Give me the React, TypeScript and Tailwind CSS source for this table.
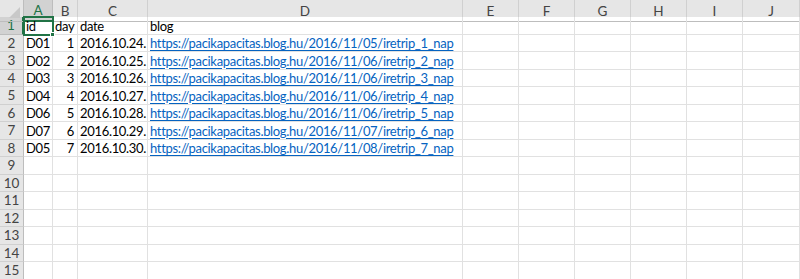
import React from "react";

const cols = ["A", "B", "C", "D", "E", "F", "G", "H", "I", "J"];

const rows = [
  { id: "id", day: "day", date: "date", blog: "blog", head: true },
  { id: "D01", day: "1", date: "2016.10.24.", blog: "https://pacikapacitas.blog.hu/2016/11/05/iretrip_1_nap" },
  { id: "D02", day: "2", date: "2016.10.25.", blog: "https://pacikapacitas.blog.hu/2016/11/06/iretrip_2_nap" },
  { id: "D03", day: "3", date: "2016.10.26.", blog: "https://pacikapacitas.blog.hu/2016/11/06/iretrip_3_nap" },
  { id: "D04", day: "4", date: "2016.10.27.", blog: "https://pacikapacitas.blog.hu/2016/11/06/iretrip_4_nap" },
  { id: "D06", day: "5", date: "2016.10.28.", blog: "https://pacikapacitas.blog.hu/2016/11/06/iretrip_5_nap" },
  { id: "D07", day: "6", date: "2016.10.29.", blog: "https://pacikapacitas.blog.hu/2016/11/07/iretrip_6_nap" },
  { id: "D05", day: "7", date: "2016.10.30.", blog: "https://pacikapacitas.blog.hu/2016/11/08/iretrip_7_nap" },
];

const TOTAL_ROWS = 15;

const gridCols = "grid-cols-[24px_29px_25px_70px_315px_56px_56px_56px_56px_56px_57px]";
const cell =
  "h-[17.5px] border-r border-b border-[#e1e1e1] pl-[2px] pr-[3px] flex items-end leading-[16px] whitespace-nowrap tracking-[-0.32px]";

export default function App() {
  const body = Array.from({ length: TOTAL_ROWS }, (_, i) => rows[i]);

  return (
    <div
      className="w-[800px] h-[279px] overflow-hidden bg-white text-[13px] text-black"
      style={{ fontFamily: "Lato, 'Open Sans', sans-serif" }}
    >
      {/* column header strip */}
      <div className={`grid ${gridCols} h-[17px] bg-[#e6e6e6] text-[#444] text-[13.5px]`}>
        <div className="relative border-r border-b border-[#bdbdbd]">
          <div className="absolute right-[3px] bottom-[3px] w-0 h-0 border-l-[11px] border-l-transparent border-b-[11px] border-b-[#c8c8c8]" />
        </div>
        {cols.map((c) => (
          <div
            key={c}
            className={
              c === "A"
                ? "flex items-center justify-center bg-[#d2d2d2] text-[#217346] border-r border-[#bdbdbd] border-b-2 border-b-[#217346]"
                : "flex items-center justify-center border-r border-b border-[#d0d0d0] border-b-[#bdbdbd]"
            }
          >
            {c}
          </div>
        ))}
      </div>

      {body.map((r, i) => (
        <div key={i} className={`grid ${gridCols}`}>
          <div
            className={
              i === 0
                ? "h-[17.5px] flex items-center justify-center bg-[#d2d2d2] text-[#217346] text-[13.5px] border-r-2 border-r-[#217346] border-b border-[#bdbdbd]"
                : "h-[17.5px] flex items-center justify-center bg-[#e6e6e6] text-[#444] text-[13.5px] border-r border-r-[#bdbdbd] border-b border-[#d0d0d0]"
            }
          >
            {i + 1}
          </div>
          {i === 0 ? (
            <div className={`${cell} relative outline-2 outline-[#217346] -outline-offset-1 z-10`}>
              {r?.id}
              <span className="absolute -right-[3px] -bottom-[3px] w-[5px] h-[5px] bg-[#217346] border border-white" />
            </div>
          ) : (
            <div className={cell}>{r?.id}</div>
          )}
          <div className={`${cell} ${r && !r.head ? "justify-end" : ""}`}>{r?.day}</div>
          <div className={cell}>{r?.date}</div>
          <div className={cell}>
            {r &&
              (r.head ? (
                r.blog
              ) : (
                <span className="text-[#0563c1] underline underline-offset-[2px]">{r.blog}</span>
              ))}
          </div>
          {cols.slice(4).map((c) => (
            <div key={c} className={cell} />
          ))}
        </div>
      ))}
    </div>
  );
}
